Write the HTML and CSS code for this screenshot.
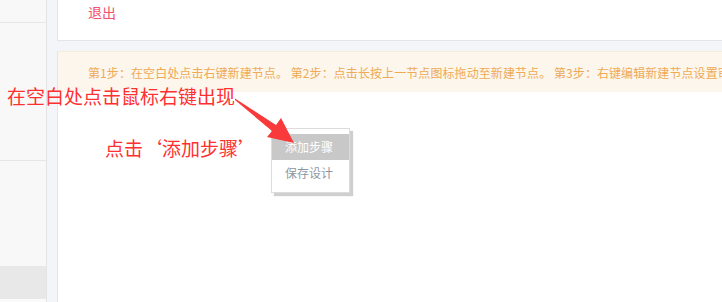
FILE: index.html
```html
<!DOCTYPE html>
<html lang="zh-CN">
<head>
<meta charset="utf-8">
<title>流程设计</title>
<link rel="stylesheet" href="styles.css">
</head>
<body>
<div class="app">
  <aside class="sidebar">
    <div class="side-item side-top"></div>
    <div class="side-item side-mid"></div>
    <div class="side-item side-fill"></div>
    <div class="side-item side-active"></div>
    <div class="side-item side-rest"></div>
  </aside>
  <main class="main">
    <header class="topbar">
      <span class="logout">退出</span>
    </header>
    <section class="workspace">
      <div class="notice">第1步：在空白处点击右键新建节点。 第2步：点击长按上一节点图标拖动至新建节点。 第3步：右键编辑新建节点设置审批人。</div>
      <div class="canvas"></div>
    </section>
  </main>
</div>

<div class="note note-1">在空白处点击鼠标右键出现</div>
<div class="note note-2">点击<span class="q q-open">‘</span>添加步骤<span class="q q-close">’</span></div>

<ul class="ctx-menu">
  <li class="ctx-item is-hover">添加步骤</li>
  <li class="ctx-item">保存设计</li>
</ul>

<svg class="arrow" width="722" height="302" viewBox="0 0 722 302">
  <polygon points="235,98.5 276,125 281,118 294,143 267,137 272,131 235,100" fill="#f93a3a"/>
</svg>
</body>
</html>
```

FILE: styles.css
```css
* { box-sizing: border-box; }
html, body {
  margin: 0;
  padding: 0;
  width: 722px;
  height: 302px;
  overflow: hidden;
  background: #fff;
  font-family: "Noto Sans CJK SC", "Noto Sans", sans-serif;
}
.app {
  display: flex;
  height: 302px;
}
.sidebar {
  width: 47px;
  flex: none;
  display: flex;
  flex-direction: column;
  background: #f8f8f8;
  border-right: 1px solid #e4e4e4;
}
.side-top { height: 23px; border-bottom: 1px solid #e6e6e6; }
.side-mid { height: 138px; border-bottom: 1px solid #e6e6e6; }
.side-fill { height: 105px; }
.side-active { height: 33px; background: #e8e8e8; }
.side-rest { flex: 1; background: #fafafa; }

.main {
  flex: 1;
  display: flex;
  flex-direction: column;
  gap: 10px;
  padding-left: 10px;
  background: #f3f5f9;
  min-width: 0;
}
.topbar {
  height: 41px;
  flex: none;
  background: #fff;
  border-left: 1px solid #e4e6ea;
  border-bottom: 1px solid #e2e4e8;
  padding-left: 30px;
}
.logout {
  display: block;
  font-size: 14px;
  line-height: 24px;
  color: #f5506e;
}
.workspace {
  flex: 1;
  display: flex;
  flex-direction: column;
  background: #fff;
  border-left: 1px solid #e4e6ea;
  min-width: 0;
}
.notice {
  height: 41px;
  line-height: 41px;
  background: #fdf6ec;
  border-top: 1px solid #f6ebdc;
  color: #eeaa55;
  font-size: 12px;
  letter-spacing: 0.08px;
  padding-left: 30px;
  white-space: nowrap;
  overflow: hidden;
}
.canvas { flex: 1; background: #fff; }

.note {
  position: absolute;
  color: #ff3030;
  font-size: 19px;
  line-height: 19px;
  white-space: nowrap;
}
.note-1 { left: 7px; top: 86px; }
.note-2 { left: 105px; top: 138px; }
.q {
  display: inline-block;
  width: 19px;
}
.q-open { text-align: right; }
.q-close { text-align: left; }

.ctx-menu {
  position: absolute;
  left: 271px;
  top: 128px;
  width: 79px;
  margin: 0;
  padding: 5px 0 6px;
  list-style: none;
  background: #fff;
  border: 1px solid #dcdcdc;
  box-shadow: 3px 3px 1px #cfcfcf;
}
.ctx-item {
  height: 26px;
  line-height: 26px;
  padding-left: 13px;
  font-size: 12px;
  color: #8e979f;
}
.ctx-item.is-hover {
  background: #c8c8c8;
  color: #fff;
}
.arrow {
  position: absolute;
  left: 0;
  top: 0;
  pointer-events: none;
}
```
